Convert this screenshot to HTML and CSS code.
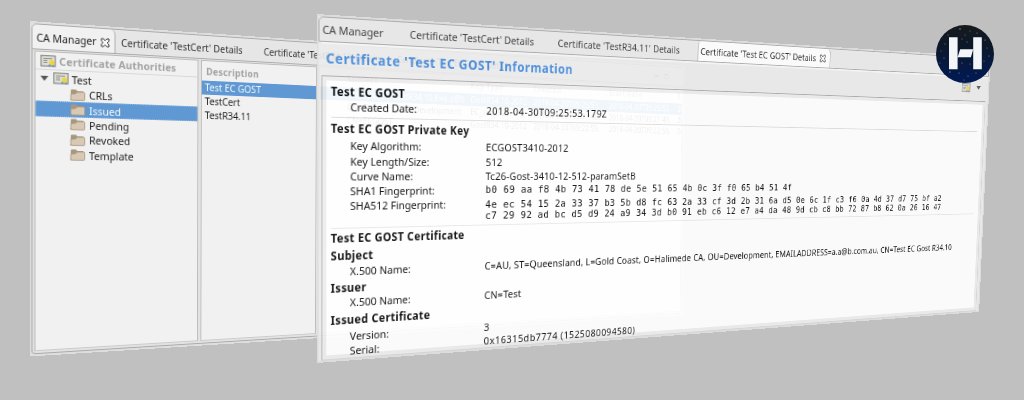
FILE: index.html
```html
<!DOCTYPE html>
<html lang="en">
<head>
<meta charset="utf-8">
<title>CA Manager</title>
<link rel="stylesheet" href="styles.css">
</head>
<body>
<svg class="defs" width="0" height="0">
  <symbol id="close" viewBox="0 0 10 10"><path d="M1 1h2.2L5 2.8 6.800 1H9v2.200L7.200 5 9 6.800V9H6.800L5 7.200 3.200 9H1V6.800L2.800 5 1 3.200z" fill="#fafafa" stroke="#333" stroke-width="1"/></symbol>
  <symbol id="cert" viewBox="0 0 16 12"><rect x=".6" y=".6" width="14.500" height="10.500" fill="#dedfd9" stroke="#8d8d8a" stroke-width="1.200"/><path d="M3 3.500h9M3 5.500h4M3 7.500h4" stroke="#8f928c" stroke-width="1"/><path d="M9 8.500l-1 3 3-1 3 1.300-.5-3z" fill="#5b8fd0"/><circle cx="11.500" cy="7.500" r="2.700" fill="#f2d33c"/></symbol>
  <symbol id="folder" viewBox="0 0 16 12"><path d="M1 11V1.500Q1 .6 2 .6h4.500l1.200 1.500H14V5H3z" fill="#a8977f"/><path d="M1 11.200V5.200l5-.4 1.500-1.800H14.600q.9 0 .9 1v6.400q0 1-1 1H2q-1 0-1-.9z" fill="#d9c9b4" stroke="#a5947e" stroke-width=".8"/></symbol>
</svg>

<section class="window back">
  <div class="tabs">
    <div class="tab active">CA Manager<svg class="x"><use href="#close"/></svg></div>
    <div class="tab t2">Certificate 'TestCert' Details</div>
    <div class="tab t3">Certificate 'TestR34.11' Details</div>
    <div class="tab t4">Certificate 'Test EC GOST' Details</div>
    <div class="tools"><i class="min"></i><i class="max"></i></div>
  </div>
  <div class="panes">
    <div class="pane tree">
      <div class="treehead"><svg class="ic"><use href="#cert"/></svg>Certificate Authorities</div>
      <div class="node root"><i class="arrow"></i><svg class="ic"><use href="#cert"/></svg>Test</div>
      <div class="node"><svg class="ic"><use href="#folder"/></svg>CRLs</div>
      <div class="node sel"><svg class="ic"><use href="#folder"/></svg>Issued</div>
      <div class="node"><svg class="ic"><use href="#folder"/></svg>Pending</div>
      <div class="node"><svg class="ic"><use href="#folder"/></svg>Revoked</div>
      <div class="node"><svg class="ic"><use href="#folder"/></svg>Template</div>
    </div>
    <div class="pane desc">
      <div class="head">Description</div>
      <div class="item sel">Test EC GOST</div>
      <div class="item">TestCert</div>
      <div class="item">TestR34.11</div>
    </div>
    <div class="pane list">
      <div class="cells head"><span>Subject</span><span>Key Type</span><span>Created</span><span>Start Date</span><span>E</span></div>
      <div class="cells sel"><span>CN=Test EC GostR34.10,E=a.a@b</span><span>GostR34.10-2012</span><span>2018-04-30T09:25:53.</span><span>2018-04-30T09:25:53.</span><span>20</span></div>
      <div class="cells"><span>CN=TestCert, OU=Development</span><span>EC_secp521r1</span><span>2018-04-30T09:21:40.</span><span>2018-04-30T09:21:40.</span><span>20</span></div>
      <div class="cells"><span>CN=ECGOST</span><span>GostR34.10-2012</span><span>2018-04-30T09:22:59.</span><span>2018-04-30T09:22:59.</span><span>20</span></div>
    </div>
  </div>
</section>

<section class="window front">
  <div class="tabs">
    <div class="tab f1">CA Manager</div>
    <div class="tab f2">Certificate 'TestCert' Details</div>
    <div class="tab f3">Certificate 'TestR34.11' Details</div>
    <div class="tab f4 active">Certificate 'Test EC GOST' Details<svg class="x"><use href="#close"/></svg></div>
  </div>
  <div class="title"><span class="name">Certificate 'Test EC GOST' Information</span><svg class="ic"><use href="#cert"/></svg><i class="arrow"></i></div>
  <div class="form">
    <h2 class="first">Test EC GOST</h2>
    <div class="row date"><span>Created Date:</span><span>2018-04-30T09:25:53.179Z</span></div>
    <hr>
    <h2 class="key">Test EC GOST Private Key</h2>
    <div class="row alg"><span>Key Algorithm:</span><span>ECGOST3410-2012</span></div>
    <div class="row"><span>Key Length/Size:</span><span>512</span></div>
    <div class="row"><span>Curve Name:</span><span>Tc26-Gost-3410-12-512-paramSetB</span></div>
    <div class="row"><span>SHA1 Fingerprint:</span><code>b0 69 aa f8 4b 73 41 78 de 5e 51 65 4b 0c 3f f0 65 b4 51 4f</code></div>
    <div class="row two"><span>SHA512 Fingerprint:</span><code>4e ec 54 15 2a 33 37 b3 5b d8 fc 63 2a 33 cf 3d 2b 31 6a d5 0e 6c 1f c3 f6 0a 4d 37 d7 75 bf a2<br>c7 29 92 ad bc d5 d9 24 a9 34 3d b0 91 eb c6 12 e7 a4 da 48 9d cb c8 bb 72 87 b8 62 0a 26 16 47</code></div>
    <hr class="second">
    <h2 class="cert">Test EC GOST Certificate</h2>
    <h2 class="sub">Subject</h2>
    <div class="row n1"><span>X.500 Name:</span><span>C=AU, ST=Queensland, L=Gold Coast, O=Halimede CA, OU=Development, EMAILADDRESS=a.a@b.com.au, CN=Test EC Gost R34.10</span></div>
    <h2 class="iss">Issuer</h2>
    <div class="row"><span>X.500 Name:</span><span>CN=Test</span></div>
    <h2 class="sub">Issued Certificate</h2>
    <div class="row ver"><span>Version:</span><span>3</span></div>
    <div class="row serial"><span>Serial:</span><span>0x16315db7774 (1525080094580)</span></div>
  </div>
</section>

<svg class="logo" viewBox="0 0 58 58">
  <defs><linearGradient id="night" x1="0" y1="0" x2="0" y2="1"><stop offset="0" stop-color="#171b1c"/><stop offset=".35" stop-color="#0d1728"/><stop offset="1" stop-color="#001a56"/></linearGradient></defs>
  <circle cx="29" cy="29" r="29" fill="url(#night)"/>
  <g fill="#7788a8"><circle cx="24" cy="4" r=".8"/><circle cx="34" cy="6" r=".5"/><circle cx="41" cy="8" r=".6"/><circle cx="29" cy="10" r=".5"/><circle cx="26" cy="14" r=".5"/><circle cx="31" cy="17" r=".6"/><circle cx="49" cy="15" r=".6"/><circle cx="51" cy="23" r=".5"/><circle cx="53" cy="31" r=".6"/><circle cx="48" cy="36" r=".5"/><circle cx="9" cy="19" r=".6"/><circle cx="5" cy="26" r=".5"/><circle cx="8" cy="33" r=".6"/><circle cx="4" cy="38" r=".5"/><circle cx="14" cy="47" r=".7"/><circle cx="23" cy="48" r=".6"/><circle cx="32" cy="51" r=".6"/><circle cx="40" cy="48" r=".6"/><circle cx="26" cy="38" r=".6"/><circle cx="34" cy="39" r=".5"/><circle cx="12" cy="10" r=".5"/><circle cx="28" cy="55" r=".5"/></g>
  <path d="M13 12.300h8.600v32H13zM37.200 12.300h8.600v32h-8.600zM24.200 24.300h13l-2.300 8H21.600z" fill="#f4f5f8"/>
</svg>
</body>
</html>
```
FILE: styles.css
```css
* { box-sizing: border-box; }
body { margin: 0; width: 1024px; height: 400px; overflow: hidden; background: #c0c0c0; position: relative; font: 11px/15px "Noto Sans", "Open Sans", sans-serif; color: #1c1c1c; white-space: nowrap; }
.defs { position: absolute; }
.x { width: 10px; height: 10px; }
.ic { width: 16px; height: 12px; flex: none; }
.arrow { border: 4.500px solid transparent; border-top: 5px solid #555; border-bottom: 0; flex: none; }

/* two windows turned away from the viewer */
.window { position: absolute; left: 0; top: 0; transform-origin: 0 0; display: flex; flex-direction: column; overflow: hidden; border: 2px solid #dedede; }
.back { width: 883px; height: 336px; background: #e6e6e6; transform: matrix3d(1.011812, .076976, 0, .000394202, .000369, 1.002887, 0, .00001229, 0, 0, 1, 0, 29.5, 21, 0, 1); }
.front { width: 926px; height: 350px; background: #ececec; opacity: .91; transform: matrix3d(1.127473, .069421, 0, .00040324, .021591, 1.021869, 0, .0000681143, 0, 0, 1, 0, 316.5, 14, 0, 1); }

.tabs { display: flex; flex: none; border: 1px solid #aaa; border-radius: 5px 5px 0 0; background: #e6e6e6; color: #333; }
.tab { display: flex; align-items: center; flex: none; }
.tab.active { background: #f1f1f1; color: #1c1c1c; }

.back .tabs { height: 26px; }
.back .tab { font-size: 10.7px; }
.back .tab.active { width: 86px; padding: 3px 0 0 4px; gap: 4px; border-right: 1px solid #aaa; border-radius: 5px 5px 0 0; }
.back .t2 { width: 165px; padding: 2px 0 0 6px; }
.back .t3 { width: 176px; padding: 2px 0 0 4px; }
.back .t4 { width: 190px; }
.tools { margin-left: auto; display: flex; gap: 10px; align-items: center; padding-right: 26px; }
.min { width: 9px; height: 3px; border: 1px solid #777; }
.max { width: 7px; height: 7px; border: 1px solid #777; border-top-width: 2px; }
.panes { flex: 1; display: flex; gap: 3px; padding: 1px 1px 2px 2px; background: #e2e2e0; border: 1px solid #aaa; border-top: 0; border-radius: 0 0 4px 4px; }
.pane { background: #f1f1f1; border: 1px solid #bbb; border-bottom-color: #ccc; }
.tree { width: 176px; }
.desc { width: 140px; }
.list { flex: 1; overflow: hidden; }
.treehead { height: 18px; display: flex; align-items: center; gap: 3px; padding-left: 5px; font-weight: bold; letter-spacing: .14px; color: #a3a3a3; border-bottom: 1px solid #d8d8d8; }
.node { height: 15.400px; display: flex; align-items: center; gap: 4px; padding-left: 35px; }
.node.root { gap: 3.500px; padding-left: 5px; height: 16px; }
.root .arrow { margin-right: 1px; }
.sel { background: #5f98d3; color: #f4f8fc; }
.node.sel { outline: 1px dotted #8fb9e3; outline-offset: -1px; }
.head { height: 20.500px; padding: 4px 0 0 5px; font-weight: bold; font-size: 10.300px; letter-spacing: .3px; color: #a3a3a3; }
.item { height: 15px; padding-left: 3.500px; font-size: 10.700px; line-height: 15px; }
.cells { height: 15px; display: grid; grid-template-columns: 171px 95px 122px 119px 20px; padding-left: 35px; font-size: 10.700px; color: #555; }
.cells.sel { color: #f4f8fc; }
.cells span { overflow: hidden; }
.cells.head { height: 20.500px; padding-left: 35px; color: #a3a3a3; }

.front .tabs { height: 25px; background: #ebebeb; }
.front .f1 { width: 92px; padding: 0 0 0 3px; letter-spacing: -.08px; }
.front .f2 { width: 169px; padding: 0 0 0 2px; }
.front .f3 { width: 187px; padding-left: 3.500px; letter-spacing: .12px; }
.front .f4 { width: 198px; padding-left: 3px; gap: 6px; border: 1px solid #aaa; border-top: 0; border-bottom: 0; border-radius: 5px 5px 0 0; letter-spacing: .12px; background: #fff; }
.title { flex: none; height: 33px; margin: 0 3px; border-top: 2px solid #f8f8f8; display: flex; align-items: center; padding: 0 11px 4px 4.500px; }
.name { flex: 1; font-weight: bold; font-size: 13.500px; letter-spacing: .62px; padding-top: 2.500px; color: #4088dc; }
.title .ic { width: 18px; margin-right: 10px; }
.form { flex: 1; margin: 0 4px 3px 3px; border: 1px solid #d6d6d6; border-top-color: #a8a8a8; border-left-color: #b4b4b4; box-shadow: inset 0 0 0 4px #ededed; background: #fff; padding: 7.300px 12px 0 8.500px; color: #000; }
h2 { margin: 0; font-size: 11.500px; line-height: 15.200px; height: 15.200px; letter-spacing: .34px; }
.row { display: grid; grid-template-columns: 149px 1fr; height: 15.200px; line-height: 15.200px; padding-left: 20px; }
.row span + span { letter-spacing: .27px; }
.row.date span + span { letter-spacing: .52px; }
.row.n1 span + span { letter-spacing: .15px; }
.row.serial span + span { letter-spacing: .6px; }
hr { margin: 2.500px 0 0; border: 0; height: 1px; background: #dcdcdc; }
code { font: 11px/12px "DejaVu Sans Mono", monospace; letter-spacing: .36px; padding-top: 2.400px; }
.key { margin-top: 3px; }
.alg { margin-top: 2px; }
.two { height: 27px; }
.second { margin-top: 3px; background: #e8e8e8; }
.cert { margin-top: 2.200px; }
.sub { margin-top: 2.500px; }
.n1 { margin-top: 1px; }
.iss { margin-top: 1.600px; }
.ver { margin-top: 1.600px; }

.logo { position: absolute; left: 936px; top: 25px; width: 58px; height: 58px; }
```
